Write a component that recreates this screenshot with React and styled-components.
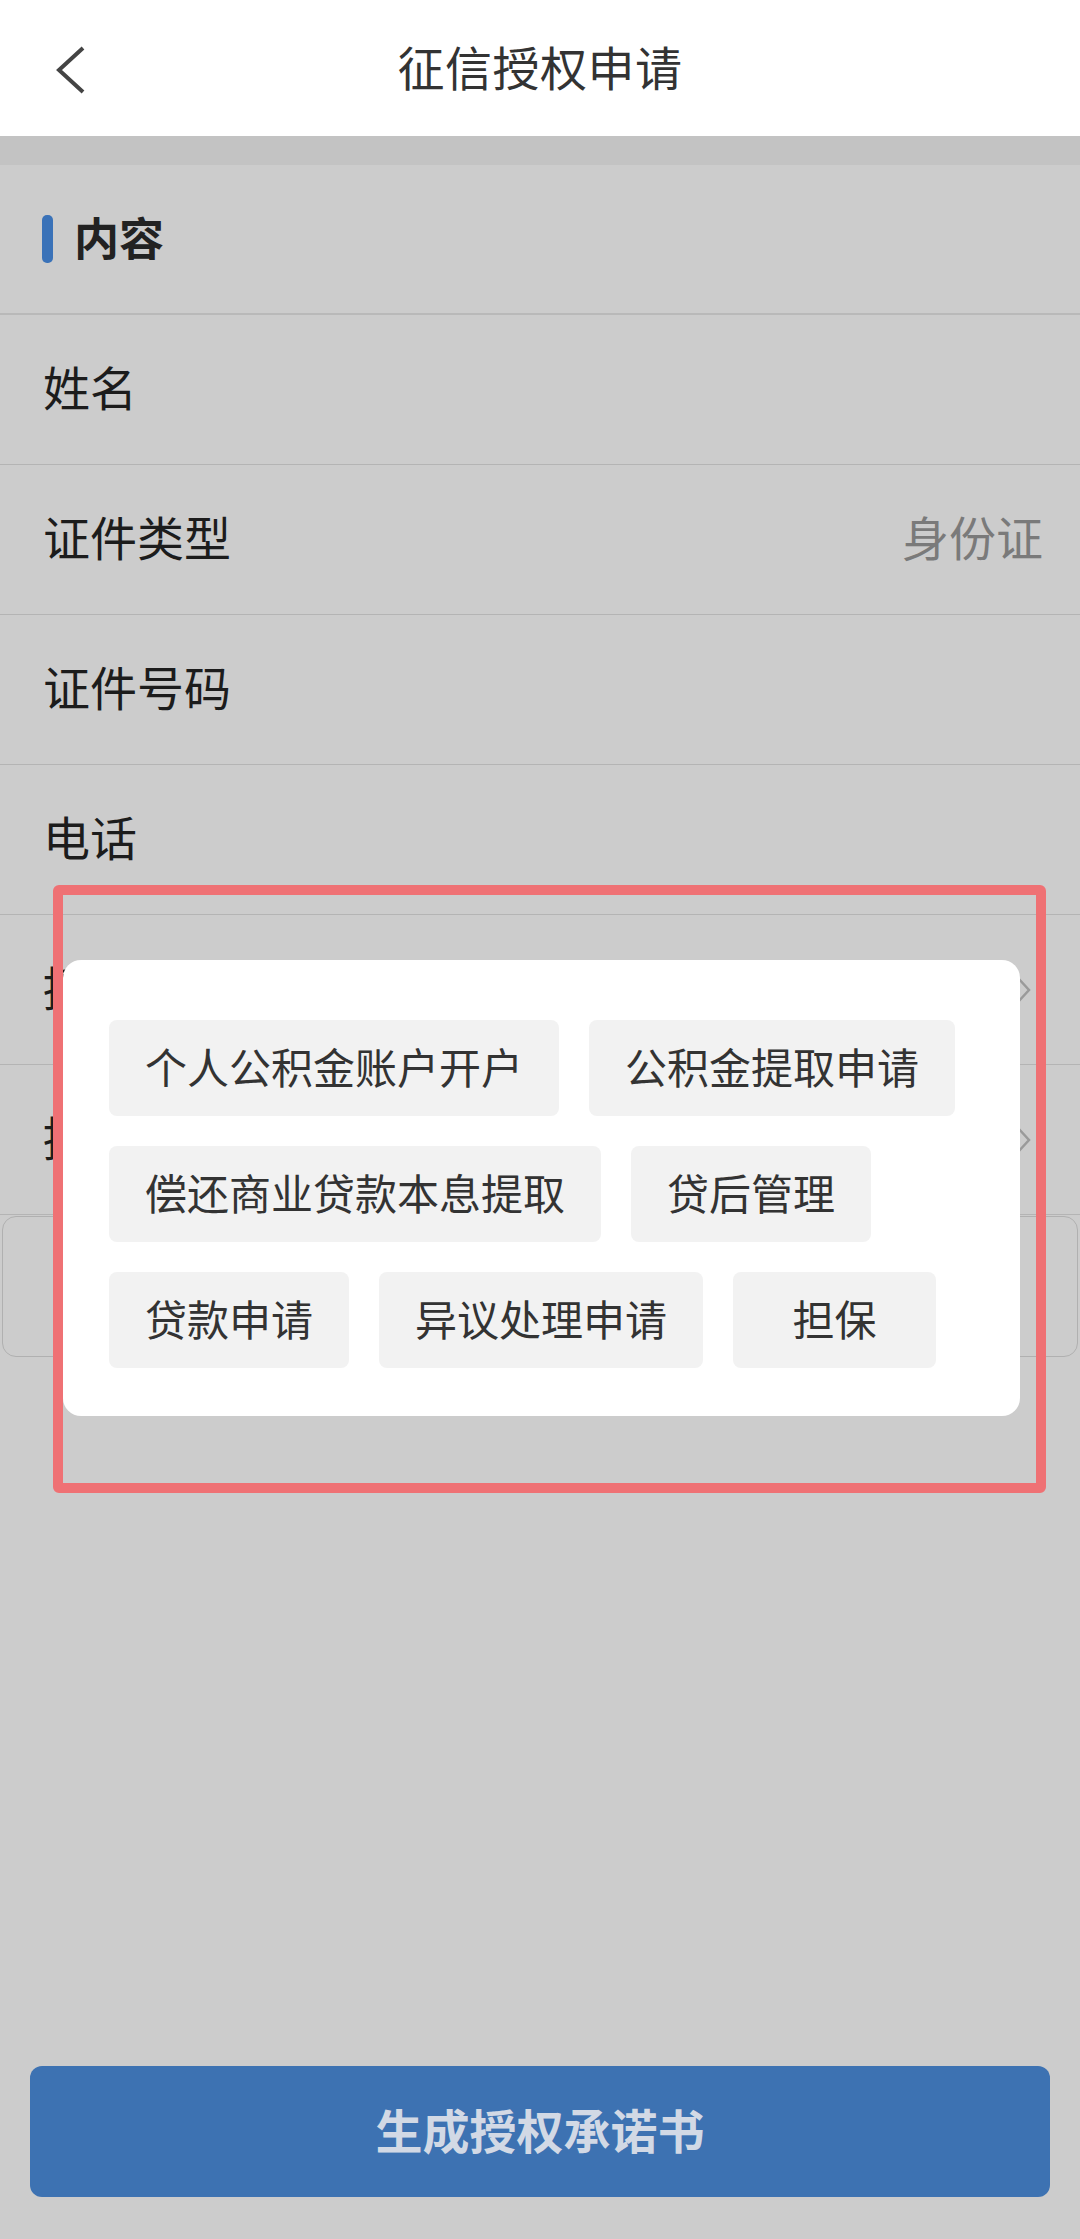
import React from 'react';
import styled, { createGlobalStyle } from 'styled-components';

const GlobalStyle = createGlobalStyle`
    html, body {
        margin: 0;
        padding: 0;
        background: #cccccc;
        font-family: "Noto Sans CJK SC", "Noto Sans", sans-serif;
    }
    * {
        box-sizing: border-box;
    }
`;

const rows = [
    { label: '姓名' },
    { label: '证件类型', value: '身份证' },
    { label: '证件号码' },
    { label: '电话' },
    { label: '授权类型', arrow: true },
    { label: '授权期限', arrow: true },
];

const chips = [
    '个人公积金账户开户',
    '公积金提取申请',
    '偿还商业贷款本息提取',
    '贷后管理',
    '贷款申请',
    '异议处理申请',
    '担保',
];

export default function App() {
    return (
        <>
            <GlobalStyle />
            <Page>
                <Header>
                    <Back>
                        <svg width="40" height="52" viewBox="0 0 40 52">
                            <polyline points="28,3 4,25 28,47" fill="none" stroke="#444" strokeWidth="4" />
                        </svg>
                    </Back>
                    <Title>征信授权申请</Title>
                </Header>
                <Band />
                <SectionTitle>
                    <Bar />
                    <span>内容</span>
                </SectionTitle>
                {rows.map((r) => (
                    <Row key={r.label}>
                        <Label>{r.label}</Label>
                        {r.value && <Value>{r.value}</Value>}
                        {r.arrow && (
                            <svg width="16" height="28" viewBox="0 0 16 28">
                                <polyline points="2,2 13,14 2,26" fill="none" stroke="#9a9a9a" strokeWidth="2.5" />
                            </svg>
                        )}
                    </Row>
                ))}
                <NoteBox />
                <Spacer />
                <SubmitButton>生成授权承诺书</SubmitButton>

                <Sheet>
                    {chips.map((c) => (
                        <Chip key={c}>{c}</Chip>
                    ))}
                </Sheet>
                <Annotation />
            </Page>
        </>
    );
}

const Page = styled.div`
    position: relative;
    min-height: 2239px;
    display: flex;
    flex-direction: column;
    background: #cccccc;
`;

const Header = styled.div`
    position: relative;
    height: 136px;
    padding-bottom: 6px;
    background: #ffffff;
    display: flex;
    align-items: center;
    justify-content: center;
`;

const Back = styled.div`
    position: absolute;
    left: 55px;
    top: 45px;
    display: flex;
`;

const Title = styled.div`
    font-size: 47px;
    color: #333333;
    letter-spacing: 0.5px;
`;

const Band = styled.div`
    height: 29px;
    background: #c3c3c3;
`;

const SectionTitle = styled.div`
    height: 150px;
    padding-left: 42px;
    display: flex;
    align-items: center;
    gap: 21px;
    border-bottom: 2px solid #b9b9b9;

    span {
        font-size: 45px;
        font-weight: 700;
        color: #222222;
        margin-top: -6px;
    }
`;

const Bar = styled.div`
    width: 11px;
    height: 48px;
    border-radius: 5px;
    background: #3a72b8;
`;

const Row = styled.div`
    height: 150px;
    padding: 0 48px 0 43px;
    display: flex;
    align-items: center;
    justify-content: space-between;
    border-bottom: 1px solid #b4b4b4;
`;

const Label = styled.div`
    margin-top: -8px;
    font-size: 47px;
    color: #1c1c1c;
`;

const Value = styled.div`
    margin: -8px -11px 0 0;
    font-size: 47px;
    color: #7a7a7a;
`;

const NoteBox = styled.div`
    margin: 1px 2px 0;
    height: 141px;
    border: 1px solid #b0b0b0;
    border-radius: 14px;
`;

const Spacer = styled.div`
    flex: 1;
`;

const SubmitButton = styled.div`
    margin: 0 30px 42px;
    height: 131px;
    padding-bottom: 6px;
    border-radius: 12px;
    background: #3d72b2;
    color: #d2d9e5;
    font-size: 47px;
    font-weight: 700;
    display: flex;
    align-items: center;
    justify-content: center;
`;

const Sheet = styled.div`
    position: absolute;
    left: 63px;
    top: 960px;
    width: 957px;
    padding: 60px 46px 48px;
    background: #ffffff;
    border-radius: 18px;
    display: flex;
    flex-wrap: wrap;
    gap: 30px 30px;
`;

const Chip = styled.div`
    height: 96px;
    min-width: 203px;
    padding: 0 36px 6px;
    border-radius: 8px;
    background: #f2f2f2;
    color: #333333;
    font-size: 42px;
    display: flex;
    align-items: center;
    justify-content: center;
`;

const Annotation = styled.div`
    position: absolute;
    left: 53px;
    top: 885px;
    width: 993px;
    height: 608px;
    border: 10px solid #ef7174;
    border-radius: 6px;
    pointer-events: none;
`;
